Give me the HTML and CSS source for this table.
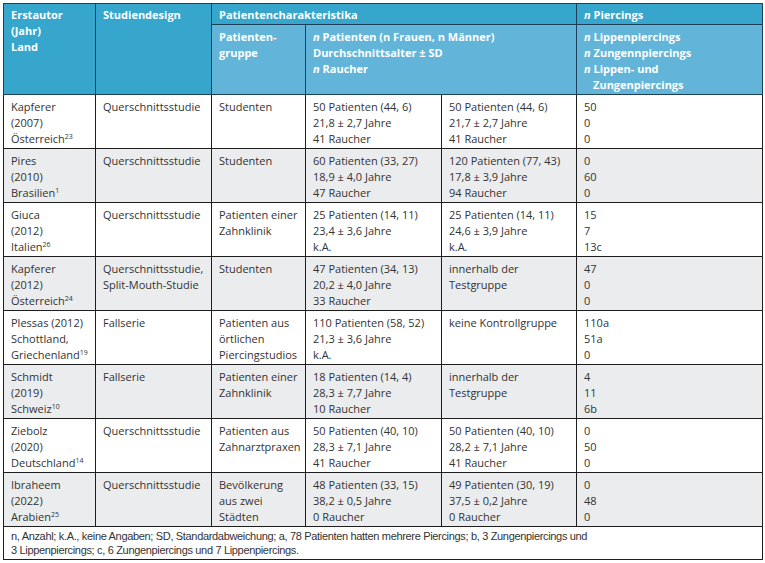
FILE: index.html
```html
<!DOCTYPE html>
<html lang="de">
<head>
<meta charset="utf-8">
<title>Piercing-Studien</title>
<link rel="stylesheet" href="styles.css">
</head>
<body>
<div class="wrap">
<table class="studies">
  <colgroup>
    <col class="c1"><col class="c2"><col class="c3"><col class="c4"><col class="c5"><col class="c6">
  </colgroup>
  <thead>
    <tr class="h1">
      <th rowspan="2" class="dark">Erstautor<br>(Jahr)<br>Land</th>
      <th rowspan="2" class="dark">Studiendesign</th>
      <th colspan="3" class="dark">Patientencharakteristika</th>
      <th class="dark"><i>n</i> Piercings</th>
    </tr>
    <tr class="h2">
      <th class="light">Patienten-<br>gruppe</th>
      <th colspan="2" class="light"><i>n</i> Patienten (n Frauen, n Männer)<br>Durchschnittsalter ± SD<br><i>n</i> Raucher</th>
      <th class="light"><i>n</i> Lippenpiercings<br><i>n</i> Zungennpiercings<br><i>n</i> Lippen- und<br><span class="hang">Zungenpiercings</span></th>
    </tr>
  </thead>
  <tbody>
    <tr>
      <td>Kapferer<br>(2007)<br>Österreich<sup>23</sup></td>
      <td>Querschnittsstudie</td>
      <td>Studenten</td>
      <td>50 Patienten (44, 6)<br>21,8 ± 2,7 Jahre<br>41 Raucher</td>
      <td>50 Patienten (44, 6)<br>21,7 ± 2,7 Jahre<br>41 Raucher</td>
      <td>50<br>0<br>0</td>
    </tr>
    <tr class="alt">
      <td>Pires<br>(2010)<br>Brasilien<sup>1</sup></td>
      <td>Querschnittsstudie</td>
      <td>Studenten</td>
      <td>60 Patienten (33, 27)<br>18,9 ± 4,0 Jahre<br>47 Raucher</td>
      <td>120 Patienten (77, 43)<br>17,8 ± 3,9 Jahre<br>94 Raucher</td>
      <td>0<br>60<br>0</td>
    </tr>
    <tr>
      <td>Giuca<br>(2012)<br>Italien<sup>26</sup></td>
      <td>Querschnittsstudie</td>
      <td>Patienten einer<br>Zahnklinik</td>
      <td>25 Patienten (14, 11)<br>23,4 ± 3,6 Jahre<br>k.A.</td>
      <td>25 Patienten (14, 11)<br>24,6 ± 3,9 Jahre<br>k.A.</td>
      <td>15<br>7<br>13c</td>
    </tr>
    <tr class="alt">
      <td>Kapferer<br>(2012)<br>Österreich<sup>24</sup></td>
      <td>Querschnittsstudie,<br>Split-Mouth-Studie</td>
      <td>Studenten</td>
      <td>47 Patienten (34, 13)<br>20,2 ± 4,0 Jahre<br>33 Raucher</td>
      <td>innerhalb der<br>Testgruppe</td>
      <td>47<br>0<br>0</td>
    </tr>
    <tr>
      <td>Plessas (2012)<br>Schottland,<br>Griechenland<sup>19</sup></td>
      <td>Fallserie</td>
      <td>Patienten aus<br>örtlichen<br>Piercingstudios</td>
      <td>110 Patienten (58, 52)<br>21,3 ± 3,6 Jahre<br>k.A.</td>
      <td>keine Kontrollgruppe</td>
      <td>110a<br>51a<br>0</td>
    </tr>
    <tr class="alt">
      <td>Schmidt<br>(2019)<br>Schweiz<sup>10</sup></td>
      <td>Fallserie</td>
      <td>Patienten einer<br>Zahnklinik</td>
      <td>18 Patienten (14, 4)<br>28,3 ± 7,7 Jahre<br>10 Raucher</td>
      <td>innerhalb der<br>Testgruppe</td>
      <td>4<br>11<br>6b</td>
    </tr>
    <tr>
      <td>Ziebolz<br>(2020)<br>Deutschland<sup>14</sup></td>
      <td>Querschnittsstudie</td>
      <td>Patienten aus<br>Zahnarztpraxen</td>
      <td>50 Patienten (40, 10)<br>28,3 ± 7,1 Jahre<br>41 Raucher</td>
      <td>50 Patienten (40, 10)<br>28,2 ± 7,1 Jahre<br>41 Raucher</td>
      <td>0<br>50<br>0</td>
    </tr>
    <tr class="alt">
      <td>Ibraheem<br>(2022)<br>Arabien<sup>25</sup></td>
      <td>Querschnittsstudie</td>
      <td>Bevölkerung<br>aus zwei<br>Städten</td>
      <td>48 Patienten (33, 15)<br>38,2 ± 0,5 Jahre<br>0 Raucher</td>
      <td>49 Patienten (30, 19)<br>37,5 ± 0,2 Jahre<br>0 Raucher</td>
      <td>0<br>48<br>0</td>
    </tr>
  </tbody>
  <tfoot>
    <tr>
      <td colspan="6" class="note">n, Anzahl; k.A., keine Angaben; SD, Standardabweichung; a, 78 Patienten hatten mehrere Piercings; b, 3 Zungenpiercings und<br>3 Lippenpiercings; c, 6 Zungenpiercings und 7 Lippenpiercings.</td>
    </tr>
  </tfoot>
</table>
</div>
</body>
</html>
```
FILE: styles.css
```css
html, body {
  margin: 0;
  padding: 0;
  background: #ffffff;
}

.wrap {
  padding: 3px 0 0 3px;
}

.studies {
  border-collapse: collapse;
  table-layout: fixed;
  width: 759px;
  font-family: "Open Sans", "Liberation Sans", sans-serif;
  font-size: 11px;
  line-height: 16px;
  color: #333333;
  border: 1px solid #1e1e1e;
}

.c1 { width: 92px; }
.c2 { width: 116px; }
.c3 { width: 94px; }
.c4 { width: 136px; }
.c5 { width: 135px; }
.c6 { width: 186px; }

.studies th {
  text-align: left;
  vertical-align: top;
  font-weight: 700;
  color: #ffffff;
  padding: 3px 6px 1px 7px;
  border: 1px solid #1d3f58;
}

.studies th.dark {
  background: #36a6cd;
}

.studies th.light {
  background: #62b5d8;
}

.studies .h2 th {
  padding-top: 4px;
  height: 63px;
}

.studies .hang {
  padding-left: 9px;
}

.studies td {
  vertical-align: top;
  padding: 4px 6px 1px 7px;
  border: 1px solid #1e1e1e;
  height: 48px;
  white-space: nowrap;
}

.studies tr.alt td {
  background: #ebeced;
}

.studies sup {
  font-size: 7px;
  line-height: 0;
  vertical-align: 4px;
}

.studies td.note {
  height: auto;
  padding: 2px 6px 2px 7px;
  font-family: "Liberation Sans", "Open Sans", sans-serif;
  font-size: 11px;
  letter-spacing: -0.33px;
  line-height: 14px;
  white-space: normal;
}
```
